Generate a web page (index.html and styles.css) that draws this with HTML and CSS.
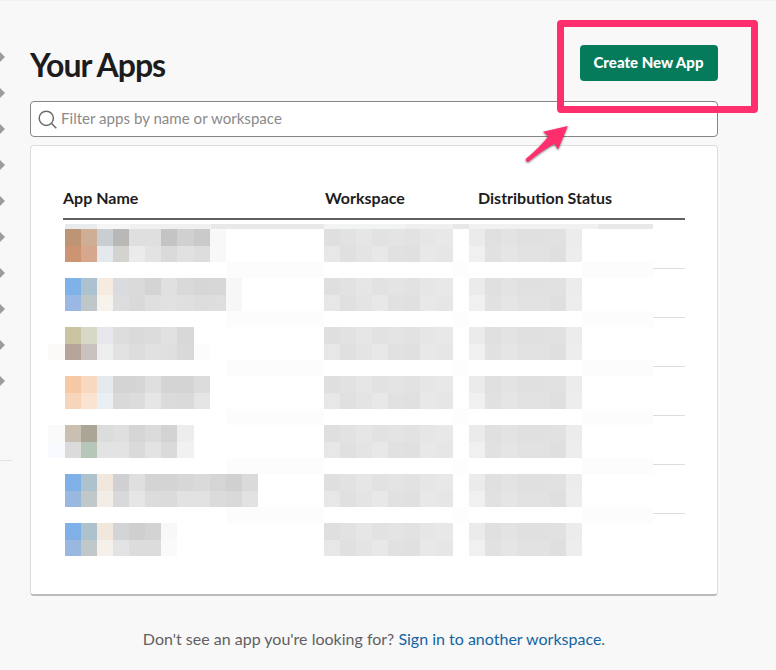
FILE: index.html
```html
<!DOCTYPE html>
<html lang="en">
<head>
<meta charset="utf-8">
<title>Your Apps</title>
<link rel="stylesheet" href="styles.css">
</head>
<body>
<div class="page">
  <aside class="rail">
    <i class="caret"></i><i class="caret"></i><i class="caret"></i><i class="caret"></i><i class="caret"></i>
    <i class="caret"></i><i class="caret"></i><i class="caret"></i><i class="caret"></i><i class="caret"></i>
    <hr class="rail-line">
  </aside>
  <main class="main">
    <header class="head">
      <h1>Your Apps</h1>
      <button class="create">Create New App</button>
    </header>
    <div class="search">
      <svg class="lens" viewBox="0 0 20 20"><circle cx="8.3" cy="8.3" r="7.1"/><path d="M13.3 13.3L18.3 18.3"/></svg>
      <span>Filter apps by name or workspace</span>
    </div>
    <section class="card">
      <div class="cols thead"><b>App Name</b><b>Workspace</b><b>Distribution Status</b></div>
      <div class="strip"></div>
      <div id="rows"></div>
    </section>
    <p class="foot">Don't see an app you're looking for? <a>Sign in to another workspace</a>.</p>
  </main>
  <div class="callout"></div>
  <svg class="arrow" viewBox="0 0 50 46"><path d="M47.8 6L23 11.8L28.4 16.2Q21 26 6 38.8Q5 42 8.4 41.8Q22 30.5 34.5 23.7L38 29.6Z"/></svg>
</div>
<script src="app.js"></script>
</body>
</html>
```
FILE: styles.css
```css
* { box-sizing: border-box; }
body { margin: 0; background: #f8f8f8; color: #1d1c1d; font-family: Lato, sans-serif; }
.page { position: relative; width: 776px; height: 670px; overflow: hidden; display: flex; border-top: 1px solid #f1f1f1; }
.rail { width: 30px; padding-top: 51px; display: flex; flex-direction: column; gap: 26px; }
.caret { width: 0; height: 0; border: 5px solid transparent; border-left-color: #9c9c9c; border-right-width: 0; }
.rail-line { width: 12px; margin: 48px 0 0; border: 0; border-top: 1px solid #e3e3e3; }
.main { width: 688px; }
.head { height: 80px; margin-top: 20px; display: flex; justify-content: space-between; }
h1 { margin: 24px 0 0; font-size: 32px; line-height: 40px; font-weight: 700; letter-spacing: -1px; }
.create { width: 138px; height: 36px; margin-top: 24px; padding: 0 1px 1px 0; border: 0; border-radius: 4px; background: #057b5c; color: #fff; font: 900 15px/35px Lato, sans-serif; }
.search { height: 36px; display: flex; align-items: center; background: #fff; border: 1px solid #868686; border-radius: 4px; color: #8b8a8b; font-size: 15.1px; }
.search span { padding-bottom: 2px; }
.lens { width: 20px; height: 20px; margin: 2px 3px 0 7px; fill: none; stroke: #6c6b6c; stroke-width: 1.5; }
.card { height: 451px; margin-top: 8px; padding: 32px 32px 0; background: #fff; border: 1px solid #ddd; border-bottom: 2px solid #bbb; border-radius: 4px; }
.cols { display: grid; grid-template-columns: 262px 153px 1fr; }
.thead { height: 42px; border-bottom: 2px solid #616061; font-size: 16px; line-height: 40px; }
.thead b { font-weight: 700; }
.strip { width: 588px; height: 5px; margin: 4px 0 0 2px; background: linear-gradient(90deg, #e8ebed 32px, #f5f5f5 32px 65px, #f0f0f0 65px 146px, #e8e8e8 146px 259px, #f2f3f3 259px 340px, #efefef 340px 388px, #e7e7e7 388px 404px, #f1f1f1 404px 533px, #e8e8e8 533px); }
.row { height: 49px; margin-left: 1.5px; display: flex; background: linear-gradient(90deg, #fff 162px, #fcfcfc 162px 259px, #fff 259px 388px, #fdfdfd 388px 404px, #fff 404px 517px, #fcfcfc 517px) 0 33px / 588px 16px no-repeat; }
.row:last-child { background: none; }
.mosaic { height: 33px; display: grid; grid-auto-flow: column; grid-template-rows: repeat(2, 1fr); grid-auto-columns: 16.14px; align-content: stretch; }
.name { width: 259px; }
.space { width: 145.5px; }
.status { width: 184px; }
.tail { width: 32px; height: 40px; border-bottom: 1px solid #ddd; }
.row:last-child .tail { border-bottom: 0; }
.foot { margin: 33px 0 0; text-align: center; font-size: 16px; line-height: 20px; color: #616061; }
.foot a { color: #1264a3; }
.callout { position: absolute; left: 557px; top: 19px; width: 201px; height: 93px; border: 7px solid #ff2f6e; border-radius: 4px; }
.arrow { position: absolute; left: 520px; top: 119px; width: 50px; height: 46px; fill: #ff2f6e; filter: drop-shadow(0 1px 1px #0008); }
```
FILE: app.js
```js
// Two lines of swatches per redacted app name
const names = [
  ["bd9575 cfae96 c9ced2 b9b8b6 dfdfdf dfdfdf c4c4c4 d0d0d0 cacaca f8f8f8", "cd9474 d6a68d e3e9ed d5d3d0 ebebeb e3e3e3 dadada e1e1e1 dddddd f8f8f8"],
  ["7fb2e8 adc2d0 f5ebe0 d9dbde dadada d4d4d4 e0e0e0 d9d9d9 d6d6d6 d7d7d7 f7f7f7", "9ab8e3 c0c7c9 f6f2ec dddddd d9d9d9 dfdfdf e1e1e1 dfdfdf dddddd dedede f7f7f7"],
  ["c9c5a2 d8d8c6 e7e7ed dddddd dadada dcdcdc e1e1e1 d8d8d8", "b6a399 c8c1be eeeeee e2e2e2 dddddd e1e1e1 dfdfdf d9d9d9 fcfcfc"],
  ["f5c9a5 f8d9c0 e5eaee d4d4d4 d5d5d5 dfdfdf d4d4d4 d4d4d4 dcdcdc", "f7d5ba fbe3d2 eaeff3 d9d9d9 dcdcdc e6e6e6 dbdbdb dadada e5e5e5"],
  ["c9c0b1 aaa597 dadddc dfdfdf d5d5d5 dbdbdb d3d3d3 ededed", "dbdbdb b6c7b9 e1e4e2 e3e3e3 dadada e3e3e3 dadada f1f1f1"],
  ["7fb0e7 adc2cc f1e7dc d0d0d2 dfdfdf d4d4d4 d4d4d4 d7d7d7 dadada d5d5d5 d0d0d0 dadada", "9ab8df c1c8c9 f2eee7 d8d9db e6e6e6 dcdcdc dbdbdb e2e2e2 e2e2e2 dbdbdb d9d9d9 e2e2e2"],
  ["7fb0e7 adc2cc f1e7dc d3d4d5 cfcfcf d3d3d3 f8f8f8", "9ab8df c1c8c9 f5f0e9 e3e3e3 dcdcdc dcdcdc fafafa"]
];
// Faint swatches left of the name column, keyed by row index
const edges = { 2: ["ffffff", "fbfaf9"], 4: ["fafafa", "f9fafd"] };
const space = ["dfdfdf e2e2e2 e6e6e6 e2e2e2 e4e4e4 e2e2e2 e6e6e6 e8e8e8", "e7e7e7 e0e0e0 e4e4e4 e8e8e8 e1e1e1 e0e0e0 e8e8e8 e6e6e6"];
const status = ["ebebeb e0e0e0 e3e3e3 e0e0e0 e0e0e0 e1e1e1 ececec", "f0f0f0 e1e1e1 e5e5e5 e2e2e2 e2e2e2 dfdfdf ededed"];

function mosaic(kind, [top, bottom], shift = 0) {
  const a = top.split(" "), b = bottom.split(" ");
  let cells = "";
  for (let i = 0; i < Math.max(a.length, b.length); i++) {
    cells += `<i style="background:#${a[i] || "ffffff"}"></i><i style="background:#${b[i] || "ffffff"}"></i>`;
  }
  const style = shift ? ` style="margin-left:${-shift}px;width:${259 + shift}px"` : "";
  return `<div class="mosaic ${kind}"${style}>${cells}</div>`;
}

document.getElementById("rows").innerHTML = names.map((n, i) => {
  const edge = edges[i];
  const lines = edge ? [edge[0] + " " + n[0], edge[1] + " " + n[1]] : n;
  return `<div class="row">${mosaic("name", lines, edge ? 16.14 : 0)}${mosaic("space", space)}${mosaic("status", status)}<div class="tail"></div></div>`;
}).join("");
```
